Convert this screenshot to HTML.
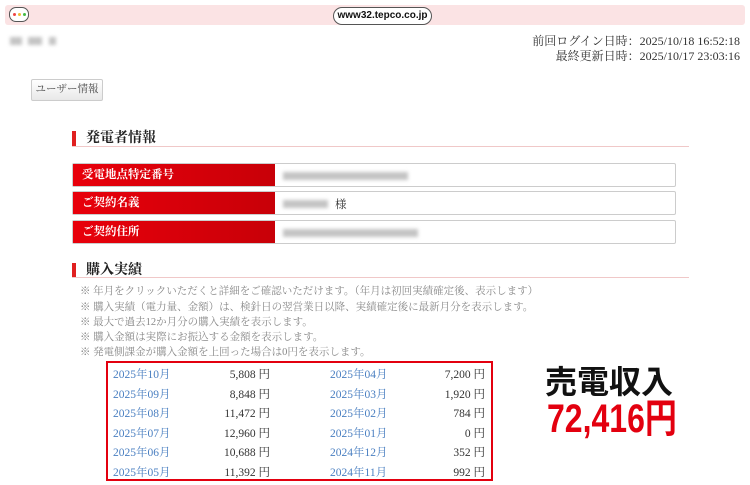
<!DOCTYPE html>
<html><head><meta charset="utf-8"><style>
*{margin:0;padding:0;box-sizing:border-box}
body{width:750px;height:485px;background:#fff;position:relative;overflow:hidden;font-family:"Liberation Serif","Noto Serif CJK SC",serif;color:#333}
.a{position:absolute}
.bar{left:5px;top:5px;width:740px;height:20px;background:#fbe3e4;border-radius:3px}
.pill{left:333px;top:7px;width:99px;height:18px;border:1px solid #555;border-radius:9px;background:#fff;font:bold 10px "Liberation Sans",sans-serif;text-align:center;line-height:16px;color:#111}
.dots{left:9px;top:7px;width:20px;height:15px;border:1px solid #555;border-radius:7px;background:#fff}
.dots i{position:absolute;top:5px;width:3px;height:3px;border-radius:50%}
.blur{background:#c4c4c4;filter:blur(1.8px);height:8px}
.rt{right:10px;font-size:12px;text-align:right;color:#333}
.btn{left:31px;top:79px;width:72px;height:22px;border:1px solid #ccc;border-radius:2px;background:linear-gradient(#fff,#e8e8e8);font-size:10.5px;text-align:center;line-height:20px;color:#444}
.h{left:72px;font-size:14px;font-weight:bold;color:#222;padding-left:10px;border-left:4px solid #e02020;line-height:15px}
.hl{left:72px;width:617px;height:1px;background:#f0c8c8}
.row{left:72px;width:604px;height:24px;border:1px solid #ccc;border-radius:2px;background:#fff}
.row .l{position:absolute;left:0;top:0;width:202px;height:22px;background:linear-gradient(90deg,#e8000b,#c80008);color:#fff;font-size:11.5px;font-weight:bold;line-height:22px;padding-left:9px}
.n{left:80px;font-size:10.5px;color:#888}
.box{left:106px;top:361px;width:387px;height:120px;border:2px solid #e3000f}
.t{font-size:11.5px}
.m{color:#4a7fc1}
.v{text-align:right;width:120px}
</style></head><body>
<div class="a bar"></div>
<div class="a dots"><i style="left:3px;background:#e44"></i><i style="left:8px;background:#eb3"></i><i style="left:13px;background:#4b4"></i></div>
<div class="a pill">www32.tepco.co.jp</div>
<div class="a blur" style="left:10px;top:37px;width:12px"></div>
<div class="a blur" style="left:28px;top:37px;width:14px"></div>
<div class="a blur" style="left:49px;top:37px;width:7px"></div>
<div class="a rt" style="top:32px">前回ログイン日時：2025/10/18 16:52:18</div>
<div class="a rt" style="top:47px">最終更新日時：2025/10/17 23:03:16</div>
<div class="a btn">ユーザー情報</div>
<div class="a h" style="top:131px">発電者情報</div>
<div class="a hl" style="top:146px"></div>
<div class="a row" style="top:163px"><div class="l">受電地点特定番号</div><div class="a blur" style="left:210px;top:8px;width:125px"></div></div>
<div class="a row" style="top:191px"><div class="l">ご契約名義</div><div class="a blur" style="left:210px;top:8px;width:45px"></div><span class="a" style="left:262px;top:4px;font-size:11.5px">様</span></div>
<div class="a row" style="top:220px"><div class="l">ご契約住所</div><div class="a blur" style="left:210px;top:8px;width:135px"></div></div>
<div class="a h" style="top:263px">購入実績</div>
<div class="a hl" style="top:277px"></div>
<div class="a n" style="top:283px">※ 年月をクリックいただくと詳細をご確認いただけます。（年月は初回実績確定後、表示します）</div>
<div class="a n" style="top:299px">※ 購入実績（電力量、金額）は、検針日の翌営業日以降、実績確定後に最新月分を表示します。</div>
<div class="a n" style="top:314px">※ 最大で過去12か月分の購入実績を表示します。</div>
<div class="a n" style="top:329px">※ 購入金額は実際にお振込する金額を表示します。</div>
<div class="a n" style="top:344px">※ 発電側課金が購入金額を上回った場合は0円を表示します。</div>
<div class="a box"></div>
<div class="a t" style="left:113px;top:366px;line-height:19.5px">
<div style="position:relative;width:375px">
<div class="m">2025年10月</div><div class="m">2025年09月</div><div class="m">2025年08月</div><div class="m">2025年07月</div><div class="m">2025年06月</div><div class="m">2025年05月</div>
<div class="a v" style="left:37px;top:0">5,808 円<br>8,848 円<br>11,472 円<br>12,960 円<br>10,688 円<br>11,392 円</div>
<div class="a m" style="left:217px;top:0">2025年04月<br>2025年03月<br>2025年02月<br>2025年01月<br>2024年12月<br>2024年11月</div>
<div class="a v" style="left:252px;top:0">7,200 円<br>1,920 円<br>784 円<br>0 円<br>352 円<br>992 円</div>
</div></div>
<div class="a" style="left:545px;top:360px;font:bold 32px 'Noto Sans CJK JP',sans-serif;color:#111;line-height:40px">売電収入</div>
<div class="a" style="left:547px;top:397px;font:bold 40px 'Liberation Sans','Noto Sans CJK JP',sans-serif;color:#e3000f;line-height:44px;transform:scaleX(.8);transform-origin:left;white-space:nowrap">72,416円</div>
</body></html>
